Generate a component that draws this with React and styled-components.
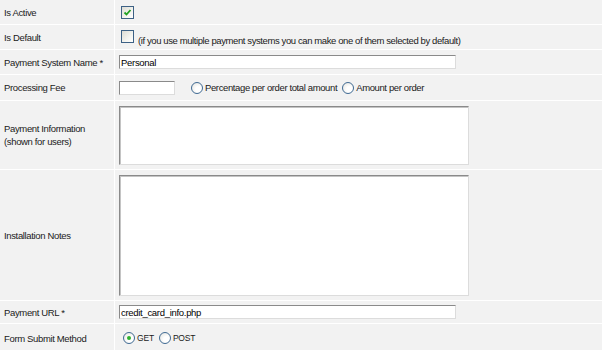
import React from "react";
import styled, { createGlobalStyle } from "styled-components";

const Global = createGlobalStyle`
	html, body {
		margin: 0;
		padding: 0;
		background: #fff;
	}
	body {
		font-family: Tahoma, "Liberation Sans", Arial, sans-serif;
		font-size: 9.5px;
		color: #1a1a1a;
	}
`;

const Form = styled.div`
	display: flex;
	flex-direction: column;
	gap: 1px;
	background: #fff;
	width: 602px;
`;

const Row = styled.div`
	display: grid;
	grid-template-columns: 114px 1fr;
	column-gap: 1px;
	min-height: ${(p) => p.$h}px;
`;

const Label = styled.div`
	background: #f2f2f2;
	display: flex;
	align-items: center;
	padding: 0 4px;
	letter-spacing: -0.35px;
	line-height: 13px;
`;

const Value = styled.div`
	background: #f2f2f2;
	display: flex;
	align-items: ${(p) => (p.$top ? "flex-start" : "center")};
	padding: ${(p) => (p.$top ? "5px 0 0 4px" : "0 0 0 4px")};
	letter-spacing: -0.35px;
`;

const Check = styled.span`
	width: 11px;
	height: 11px;
	border: 1px solid #3d6185;
	background: linear-gradient(135deg, #dcdcd4 0%, #f4f4f0 60%, #ffffff 100%);
	display: inline-flex;
	align-items: center;
	justify-content: center;
	margin-left: 2px;
	margin-top: ${(p) => p.$up || 0}px;
	flex-shrink: 0;
`;

const Radio = styled.span`
	width: 10px;
	height: 10px;
	border: 1px solid #3f6a93;
	border-radius: 50%;
	background: radial-gradient(circle at 65% 65%, #fff 30%, #e2e2dc 100%);
	display: inline-flex;
	align-items: center;
	justify-content: center;
	margin-left: ${(p) => p.$gap || 0}px;
	margin-right: 2px;
	flex-shrink: 0;

	&::after {
		content: "";
		width: 4px;
		height: 4px;
		border-radius: 50%;
		background: ${(p) => (p.$on ? "#2fb12f" : "transparent")};
	}
`;

const Hint = styled.span`
	margin-left: 4px;
	margin-top: 6px;
	letter-spacing: -0.4px;
`;

const Text = styled.span`
	font-size: ${(p) => p.$size || 9.5}px;
	letter-spacing: ${(p) => (p.$size ? "-0.2px" : "-0.38px")};
`;

const Field = styled.input`
	width: ${(p) => p.$w}px;
	height: 14px;
	box-sizing: border-box;
	border: 1px solid;
	border-color: #8a8a8a #dcdcdc #dcdcdc #8a8a8a;
	background: #fff;
	font-family: inherit;
	font-size: 9.5px;
	letter-spacing: -0.3px;
	padding: 0 1px;
	margin: 0;
	color: #000;
	outline: none;
`;

const Area = styled.textarea`
	width: 350px;
	height: ${(p) => p.$h}px;
	box-sizing: border-box;
	border: 1px solid;
	border-color: #8a8a8a #dcdcdc #dcdcdc #8a8a8a;
	box-shadow: inset 1px 1px 0 #c4c4c4;
	background: #fff;
	resize: none;
	margin: 0;
	outline: none;
`;

const Tick = () => (
	<svg width="9" height="9" viewBox="0 0 9 9">
		<path d="M1.5 4.5 L3.5 6.5 L7.5 2" fill="none" stroke="#21a121" strokeWidth="1.8" />
	</svg>
);

export default function App() {
	return (
		<>
			<Global />
			<Form>
				<Row $h={24}>
					<Label>Is Active</Label>
					<Value>
						<Check>
							<Tick />
						</Check>
					</Value>
				</Row>
				<Row $h={24}>
					<Label>Is Default</Label>
					<Value>
						<Check $up={-2} />
						<Hint>(if you use multiple payment systems you can make one of them selected by default)</Hint>
					</Value>
				</Row>
				<Row $h={24}>
					<Label>Payment System Name *</Label>
					<Value>
						<Field $w={337} defaultValue="Personal" />
					</Value>
				</Row>
				<Row $h={25}>
					<Label>Processing Fee</Label>
					<Value>
						<Field $w={56} />
						<Radio $gap={16} />
						<Text>Percentage per order total amount</Text>
						<Radio $gap={5} />
						<Text>Amount per order</Text>
					</Value>
				</Row>
				<Row $h={68}>
					<Label>
						Payment Information
						<br />
						(shown for users)
					</Label>
					<Value $top>
						<Area $h={59} />
					</Value>
				</Row>
				<Row $h={130}>
					<Label>Installation Notes</Label>
					<Value $top>
						<Area $h={121} />
					</Value>
				</Row>
				<Row $h={22}>
					<Label>Payment URL *</Label>
					<Value>
						<Field $w={337} defaultValue="credit_card_info.php" />
					</Value>
				</Row>
				<Row $h={28}>
					<Label>Form Submit Method</Label>
					<Value>
						<Radio $gap={4} $on />
						<Text $size={8.5}>GET</Text>
						<Radio $gap={5} />
						<Text $size={8.5}>POST</Text>
					</Value>
				</Row>
			</Form>
		</>
	);
}
